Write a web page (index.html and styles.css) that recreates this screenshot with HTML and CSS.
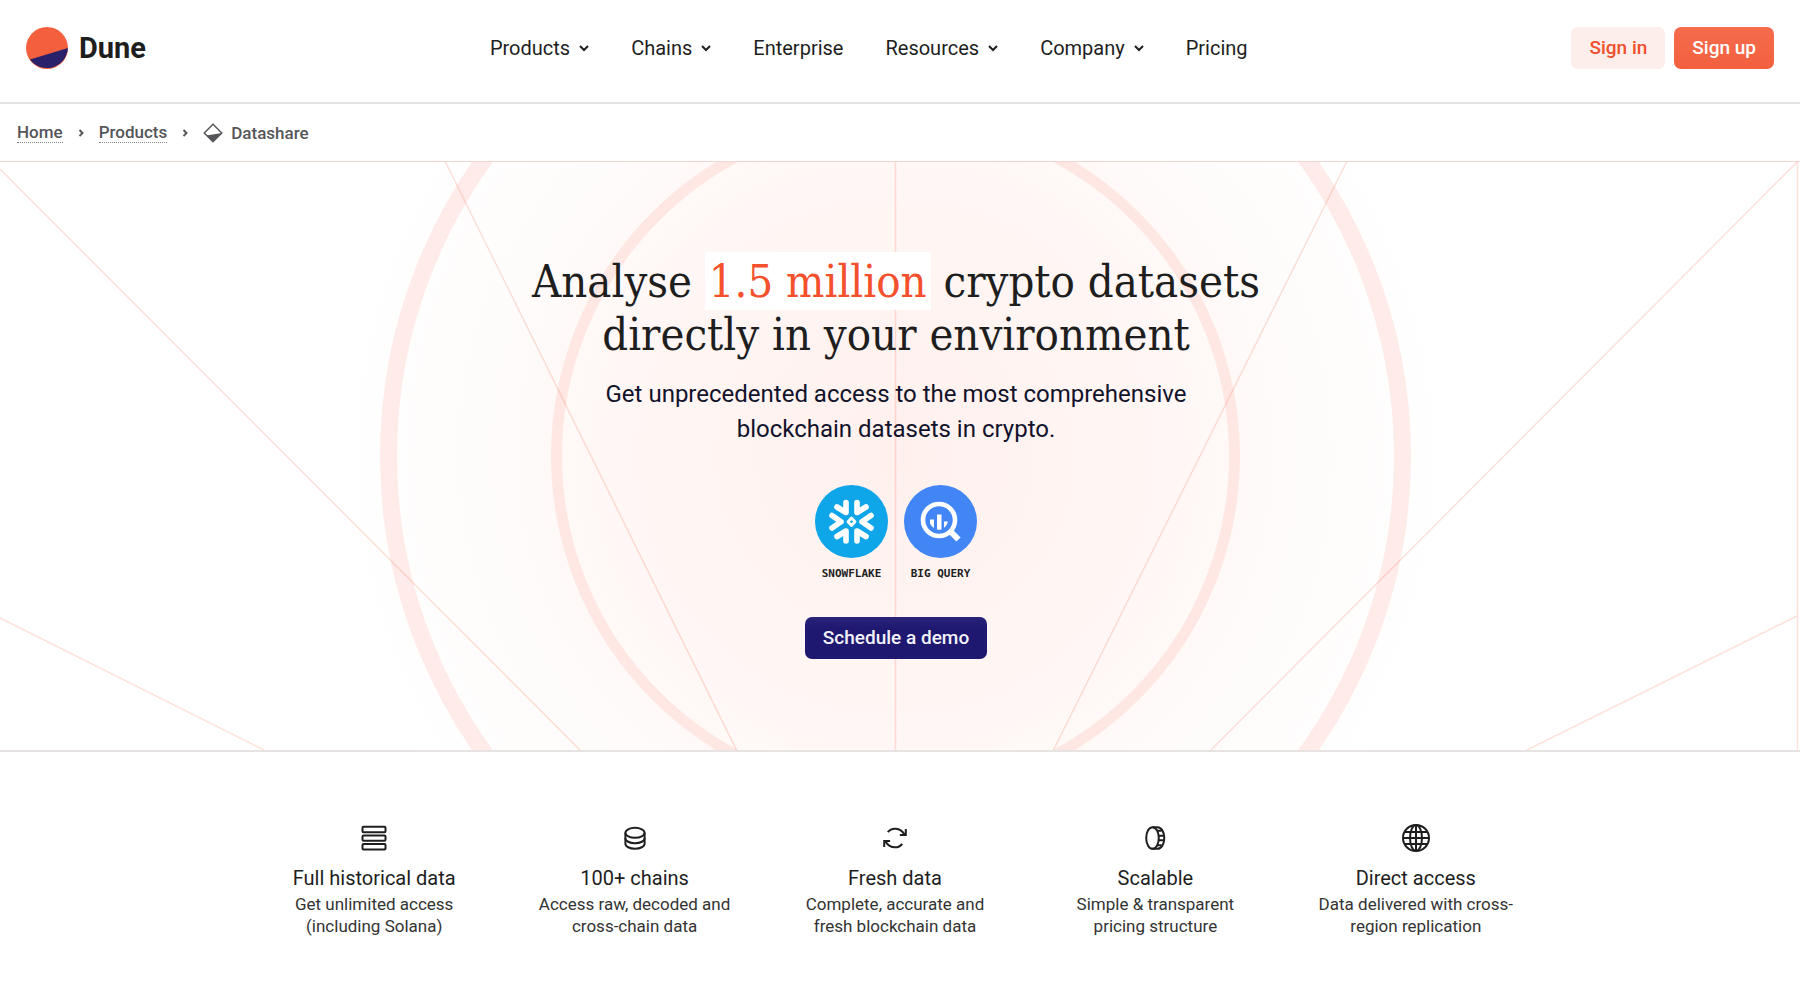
FILE: index.html
```html
<!DOCTYPE html>
<html lang="en">
<head>
    <meta charset="UTF-8">
    <meta name="viewport" content="width=device-width, initial-scale=1.0">
    <title>Dune Datashare</title>
    <link rel="stylesheet" href="styles.css">
</head>
<body>
    <header class="header">
        <a class="brand" href="#">
            <svg class="brand-logo" viewBox="0 0 42 42">
                <circle cx="21" cy="21" r="21" fill="#f4603e"/>
                <path d="M4 32.5 41.9 21A21 21 0 0 1 4 32.5Z" fill="#2a216b"/>
            </svg>
            <span>Dune</span>
        </a>

        <nav class="nav">
            <button type="button" class="nav-item">Products
                <svg class="chevron" viewBox="0 0 10 10"><path d="M1 3l4 4 4-4"/></svg>
            </button>
            <button type="button" class="nav-item">Chains
                <svg class="chevron" viewBox="0 0 10 10"><path d="M1 3l4 4 4-4"/></svg>
            </button>
            <a class="nav-item" href="#">Enterprise</a>
            <button type="button" class="nav-item">Resources
                <svg class="chevron" viewBox="0 0 10 10"><path d="M1 3l4 4 4-4"/></svg>
            </button>
            <button type="button" class="nav-item">Company
                <svg class="chevron" viewBox="0 0 10 10"><path d="M1 3l4 4 4-4"/></svg>
            </button>
            <a class="nav-item" href="#">Pricing</a>
        </nav>

        <div class="actions">
            <a class="btn btn-light" href="#">Sign in</a>
            <a class="btn btn-primary" href="#">Sign up</a>
        </div>
    </header>

    <nav class="breadcrumb">
        <a href="#">Home</a>
        <svg class="separator" viewBox="0 0 6 8"><path d="M1.5 1l3 3-3 3"/></svg>
        <a href="#">Products</a>
        <svg class="separator" viewBox="0 0 6 8"><path d="M1.5 1l3 3-3 3"/></svg>
        <span class="current">
            <svg class="diamond" viewBox="0 0 20 20">
                <path d="M10 1.2 18.8 10 10 18.8 1.2 10Z" fill="none" stroke="#55565a" stroke-width="1.4"/>
                <path d="M3.6 12.6 18.8 10 10 18.8Z" fill="#55565a"/>
            </svg>
            Datashare
        </span>
    </nav>

    <main>
        <section class="hero">
            <svg class="hero-art" viewBox="0 0 1800 590" preserveAspectRatio="xMidYMid slice">
                <defs>
                    <radialGradient id="glow" gradientUnits="userSpaceOnUse" cx="895" cy="295" r="560">
                        <stop offset="0" stop-color="#fff0ed"/>
                        <stop offset="0.5" stop-color="#fff7f5"/>
                        <stop offset="0.75" stop-color="#fefcfb"/>
                        <stop offset="1" stop-color="#ffffff"/>
                    </radialGradient>
                </defs>
                <circle cx="895" cy="295" r="560" fill="url(#glow)"/>
                <!-- Rings -->
                <g fill="none" stroke="#fd5d45" stroke-opacity="0.11">
                    <circle cx="895.5" cy="295" r="507" stroke-width="17"/>
                    <circle cx="895.5" cy="295" r="339" stroke-width="11"/>
                </g>
                <!-- Rays -->
                <g fill="none" stroke="#f4603e" stroke-opacity="0.19" stroke-width="1.5">
                    <path d="M0 8 581 590M445 0 737 590M0 457 266 590"/>
                    <path d="M1798 0 1210 590M1347 0 1053 590M1797 455 1525 590"/>
                    <path d="M895.5 0V590M1797.5 0V590"/>
                </g>
            </svg>

            <div class="hero-content">
                <h1>Analyse <span class="highlight">1.5 million</span> crypto datasets<br>directly in your environment</h1>
                <p class="lead">Get unprecedented access to the most comprehensive<br>blockchain datasets in crypto.</p>

                <div class="platforms">
                    <div class="platform">
                        <svg class="platform-logo" viewBox="0 0 73 73">
                            <circle cx="36.5" cy="36.5" r="36.5" fill="#0ea5e9"/>
                            <g fill="none" stroke="#fff" stroke-width="5.6" stroke-linecap="round" stroke-linejoin="round">
                                <path d="M31 17.5V27.5L22 22M42 17.5V27.5L51 22"/>
                                <path d="M31 56V46L22 51.5M42 56V46L51 51.5"/>
                                <path d="M17 30.5 26 36.8 17 43M56 30.5 47 36.8 56 43"/>
                            </g>
                            <path d="M36.5 33 40 36.7 36.5 40.5 33 36.7Z" fill="none" stroke="#fff" stroke-width="2.8" stroke-linejoin="round"/>
                        </svg>
                        <span>SNOWFLAKE</span>
                    </div>
                    <div class="platform">
                        <svg class="platform-logo" viewBox="0 0 73 73">
                            <circle cx="36.5" cy="36.5" r="36.5" fill="#4285f4"/>
                            <circle cx="35" cy="35" r="16" fill="none" stroke="#fff" stroke-width="4.6"/>
                            <path d="M46.5 46.5 54.5 54.5" stroke="#fff" stroke-width="6"/>
                            <path d="M26 34.5h4v8.5q-3-2-4-4.5ZM33 29.5h4.5v15q-2.2.6-4.5 0ZM40 36.5h4q-.8 4-4 6.5Z" fill="#fff"/>
                        </svg>
                        <span>BIG QUERY</span>
                    </div>
                </div>

                <a class="btn btn-dark" href="#">Schedule a demo</a>
            </div>
        </section>

        <section class="features">
            <article class="feature">
                <svg class="feature-icon" viewBox="0 0 28 28">
                    <rect x="2.5" y="2.8" width="23" height="5.4" rx="1"/>
                    <rect x="2.5" y="11.4" width="23" height="5.4" rx="1"/>
                    <rect x="2.5" y="20" width="23" height="5.4" rx="1"/>
                </svg>
                <h2>Full historical data</h2>
                <p>Get unlimited access<br>(including Solana)</p>
            </article>
            <article class="feature">
                <svg class="feature-icon" viewBox="0 0 28 28">
                    <ellipse cx="14" cy="8.8" rx="9.6" ry="5"/>
                    <path d="M4.4 8.8V19.7C4.4 22.5 8.7 24.7 14 24.7S23.6 22.5 23.6 19.7V8.8"/>
                    <path d="M4.4 14.2C4.4 17 8.7 19.2 14 19.2S23.6 17 23.6 14.2"/>
                </svg>
                <h2>100+ chains</h2>
                <p>Access raw, decoded and<br>cross-chain data</p>
            </article>
            <article class="feature">
                <svg class="feature-icon" viewBox="0 0 28 28">
                    <path d="M6.8 8.2C10.6 3.2 19.2 3.3 23.3 10.3M24.8 5V10.9H18.9"/>
                    <path d="M21.2 19.8C17.4 24.8 8.8 24.7 4.7 17.7M3.2 23V17.1H9.1"/>
                </svg>
                <h2>Fresh data</h2>
                <p>Complete, accurate and<br>fresh blockchain data</p>
            </article>
            <article class="feature">
                <svg class="feature-icon" viewBox="0 0 28 28">
                    <ellipse cx="11.5" cy="14" rx="6.3" ry="10.8"/>
                    <path d="M11.5 3.2H16.5C20.4 3.2 23.3 8 23.3 14S20.4 24.8 16.5 24.8H11.5"/>
                    <path d="M16.2 6.7H20.6M17.8 11.7H23M17.8 16.3H23M16.2 21.3H20.6"/>
                </svg>
                <h2>Scalable</h2>
                <p>Simple &amp; transparent<br>pricing structure</p>
            </article>
            <article class="feature">
                <svg class="feature-icon" viewBox="0 0 28 28">
                    <circle cx="14" cy="14" r="13"/>
                    <ellipse cx="14" cy="14" rx="6" ry="13"/>
                    <path d="M14 1V27M1 14H27M2.6 8H25.4M2.6 20H25.4"/>
                </svg>
                <h2>Direct access</h2>
                <p>Data delivered with cross-<br>region replication</p>
            </article>
        </section>
    </main>
</body>
</html>
```
FILE: styles.css
```css
* {
    box-sizing: border-box;
}

body {
    margin: 0;
    font-family: Roboto, "Liberation Sans", sans-serif;
    color: #1e1e1e;
    background-color: #fff;
}

a {
    color: inherit;
    text-decoration: none;
}

.header {
    display: flex;
    align-items: center;
    justify-content: space-between;
    padding: 27px 26px 33px;
    border-bottom: 2px solid #e4e4e4;
}

.brand {
    display: flex;
    align-items: center;
    gap: 11px;
    font-size: 29px;
    line-height: 42px;
    font-weight: 700;
}

.brand-logo {
    width: 42px;
    height: 42px;
}

.nav {
    display: flex;
    gap: 42px;
    margin-left: 20px;
}

.nav-item {
    display: flex;
    align-items: center;
    gap: 9px;
    padding: 0;
    border: none;
    background: none;
    font: inherit;
    font-size: 20px;
    line-height: 42px;
    color: #1e1e1e;
    cursor: pointer;
}

.chevron {
    width: 10px;
    height: 10px;
    fill: none;
    stroke: #1e1e1e;
    stroke-width: 2;
}

.actions {
    display: flex;
    gap: 9px;
}

.btn {
    display: inline-block;
    padding: 0 18px;
    border-radius: 7px;
    font-size: 19px;
    line-height: 42px;
    font-weight: 500;
}

.btn-light {
    color: #f0502c;
    background-color: #feeeeb;
}

.btn-primary {
    color: #fff;
    background: linear-gradient(#f56c4c, #f3603e);
}

.btn-dark {
    color: #f3f2fa;
    background: linear-gradient(#2b2279, #1e1870 30%);
}

.breadcrumb {
    display: flex;
    align-items: center;
    gap: 15px;
    padding: 18px 17px;
    font-size: 17px;
    line-height: 20px;
    font-weight: 500;
    color: #55565a;
}

.breadcrumb a {
    border-bottom: 1px dotted #85868a;
}

.separator {
    width: 6px;
    height: 8px;
    fill: none;
    stroke: #55565a;
    stroke-width: 2;
}

.current {
    display: flex;
    align-items: center;
    gap: 8px;
}

.diamond {
    width: 20px;
    height: 20px;
}

.hero {
    position: relative;
    border-top: 1px solid #f2d5d1;
    border-bottom: 2px solid #e8e3e3;
}

/* Decoration behind the hero content */
.hero-art {
    position: absolute;
    top: 0;
    left: 0;
    width: 100%;
    height: 100%;
}

.hero-content {
    position: relative;
    display: flex;
    flex-direction: column;
    align-items: center;
    padding: 93px 8px 91px 0;
    text-align: center;
}

h1 {
    margin: 0;
    font-family: "DejaVu Serif Condensed", "DejaVu Serif", serif;
    font-size: 45px;
    line-height: 53px;
    font-weight: 400;
}

.highlight {
    padding: 3px 4px 2px;
    color: #f4502c;
    background-color: #fff;
}

.lead {
    margin: 16px 0 38px;
    font-size: 24px;
    line-height: 35px;
    color: #12122b;
}

.platforms {
    display: flex;
    gap: 16px;
    margin-bottom: 35px;
}

.platform {
    display: flex;
    flex-direction: column;
    align-items: center;
    gap: 8px;
    width: 73px;
    font-family: "DejaVu Sans Mono", monospace;
    font-size: 11px;
    line-height: 16px;
    font-weight: 700;
}

.platform-logo {
    width: 73px;
    height: 73px;
}

.features {
    display: grid;
    grid-template-columns: repeat(5, 1fr);
    max-width: 1312px;
    margin: 0 auto;
    padding: 72px 10px 60px 0;
    text-align: center;
}

.feature-icon {
    width: 28px;
    height: 28px;
    fill: none;
    stroke: #1e1e1e;
    stroke-width: 2;
}

.feature h2 {
    margin: 9px 0 2px;
    font-size: 20px;
    line-height: 26px;
    font-weight: 400;
}

.feature p {
    margin: 0;
    font-size: 17px;
    line-height: 22px;
    color: #333;
}
```
